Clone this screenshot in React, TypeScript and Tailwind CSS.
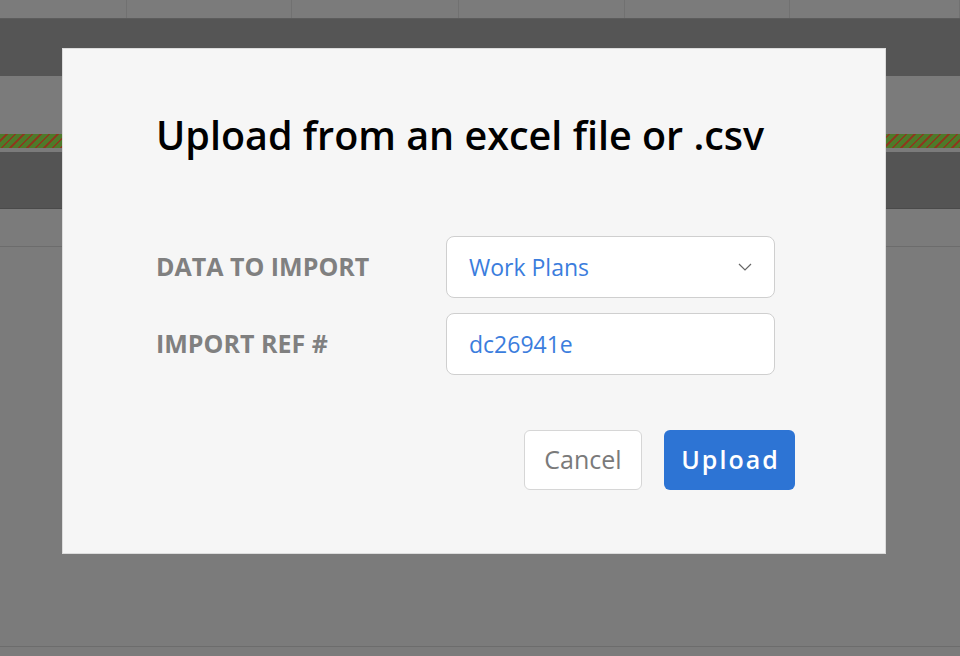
import React from "react";

const cols = [127, 165, 167, 166, 165, 170];

export default function App() {
  return (
    <div className="relative w-[960px] h-[656px] overflow-hidden bg-[#7b7b7b] font-['Open_Sans',sans-serif]">
      {/* background (dimmed by overlay) */}
      <div className="flex flex-col">
        <div className="flex h-[19px] border-b border-[#5c5c5c]">
          {cols.map((w, i) => (
            <div key={i} style={{ width: w }} className="h-full border-r border-[#717171]" />
          ))}
        </div>
        <div className="h-[57px] bg-[#555555]" />
        <div className="h-[58px]" />
        <div className="h-[14px] bg-[repeating-linear-gradient(135deg,#4e7a2a_0px,#4e7a2a_4px,#8a3b1f_4px,#8a3b1f_6px)]" />
        <div className="h-[4px]" />
        <div className="h-[57px] bg-[#545454] border-b border-[#4a4a4a]" />
        <div className="h-[38px] border-b border-[#6c6c6c]" />
        <div className="h-[400px] border-b border-[#6c6c6c]" />
      </div>

      {/* modal */}
      <div className="absolute left-[62px] top-[48px] w-[824px] h-[506px] bg-[#f6f6f6] border border-[#dcdcdc] pl-[93px] pr-[90px] pt-[62px]">
        <h1 className="text-[39.5px] leading-[48px] font-semibold text-black">
          Upload from an excel file or .csv
        </h1>
        <div className="mt-[77px] flex flex-col gap-[15px] pr-[20px]">
          <div className="flex items-center">
            <div className="w-[290px] text-[25px] font-bold text-[#808080]">DATA TO IMPORT</div>
            <div className="flex-1 h-[62px] bg-white border border-[#cfcfcf] rounded-[8px] flex items-center justify-between pl-[22px] pr-[22px]">
              <span className="text-[23px] text-[#3b7ddd]">Work Plans</span>
              <svg width="14" height="8" viewBox="0 0 14 8" fill="none">
                <path d="M1 1l6 6 6-6" stroke="#666" strokeWidth="1.2" />
              </svg>
            </div>
          </div>
          <div className="flex items-center">
            <div className="w-[290px] text-[25px] font-bold text-[#808080]">IMPORT REF #</div>
            <div className="flex-1 h-[62px] bg-white border border-[#cfcfcf] rounded-[8px] flex items-center pl-[22px]">
              <span className="text-[23px] text-[#3b7ddd]">dc26941e</span>
            </div>
          </div>
        </div>
        <div className="mt-[55px] flex justify-end gap-[22px]">
          <button className="w-[118px] h-[60px] bg-white border border-[#d6d6d6] rounded-[6px] text-[25px] text-[#7a7a7a]">
            Cancel
          </button>
          <button className="w-[131px] h-[60px] bg-[#2d74d4] rounded-[6px] text-[25px] font-semibold text-white tracking-[2px] pl-[2px]">
            Upload
          </button>
        </div>
      </div>
    </div>
  );
}
